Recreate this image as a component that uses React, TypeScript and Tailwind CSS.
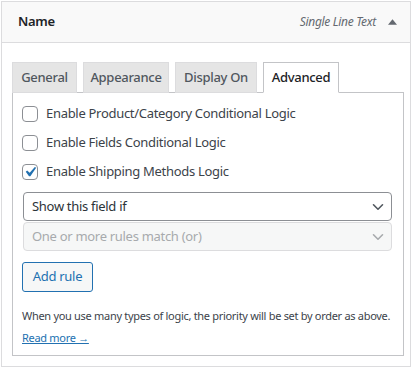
const tabs = [
  { label: "General", w: "w-[65px]" },
  { label: "Appearance", w: "w-[86px]" },
  { label: "Display On", w: "w-[82px]" },
  { label: "Advanced", w: "w-[76px]" },
]

const options = [
  { label: "Enable Product/Category Conditional Logic", checked: false },
  { label: "Enable Fields Conditional Logic", checked: false },
  { label: "Enable Shipping Methods Logic", checked: true },
]

function Chevron({ className }: { className: string }) {
  return (
    <svg className={className} viewBox="0 0 12 8" fill="none" stroke="currentColor" strokeWidth={1.6}>
      <path d="M1.5 1.8 6 6.2l4.5-4.4" strokeLinecap="round" strokeLinejoin="round" />
    </svg>
  )
}

export default function App() {
  return (
    <div className="w-[415px] h-[367px] bg-white pl-px pt-px font-['Noto_Sans',sans-serif] tracking-[-0.3px]">
      <div className="w-[410px] h-[366px] border border-[#dcdcde] flex flex-col">
        <div className="h-[41px] shrink-0 bg-[#f9f9f9] border-b border-[#dcdcde] flex items-center pl-[16px] pr-[13px]">
          <span className="text-[13px] font-semibold text-[#1d2327]">Name</span>
          <span className="ml-auto text-[12px] italic text-[#646970]">Single Line Text</span>
          <svg className="ml-[12px] w-[9px] h-[6px] text-[#646970]" viewBox="0 0 10 6" fill="currentColor">
            <path d="M5 0 10 6H0z" />
          </svg>
        </div>
        <div className="pt-[19px] pl-[10px] pr-[6px]">
          <div className="flex gap-[6px] h-[31px] relative z-10">
            {tabs.map((t) => {
              const active = t.label === "Advanced"
              return (
                <div
                  key={t.label}
                  className={
                    active
                      ? `${t.w} justify-center flex items-center border border-[#c3c4c7] border-b-white bg-white text-[13px] text-[#1d2327] font-medium`
                      : `${t.w} justify-center flex items-center border border-[#dcdcde] bg-[#e5e5e5] text-[13px] text-[#50575e] font-medium`
                  }
                >
                  {t.label}
                </div>
              )
            })}
          </div>
          <div className="-mt-px border border-[#c3c4c7] h-[264px] pl-[9px] pr-[9px] pt-[13px]">
            <div className="flex flex-col gap-[13px]">
              {options.map((o) => (
                <label key={o.label} className="flex items-center gap-[8px] h-[16px]">
                  <span className="w-[16px] h-[16px] shrink-0 rounded-[4px] border border-[#8c8f94] bg-white flex items-center justify-center">
                    {o.checked && (
                      <svg className="w-[20px] h-[20px] -m-[3px] text-[#2271b1]" viewBox="0 0 20 20" fill="currentColor">
                        <path d="M14.83 4.89l1.34.94-5.81 8.38H9.02L5.78 9.67l1.34-1.25 2.57 2.4z" />
                      </svg>
                    )}
                  </span>
                  <span className="text-[13px] text-[#3c434a]">{o.label}</span>
                </label>
              ))}
            </div>
            <div className="mt-[12px] ml-px w-[369px]">
              <div className="h-[29px] border border-[#8c8f94] rounded-[4px] bg-white flex items-center pl-[8px] pr-[7px]">
                <span className="text-[13px] text-[#2c3338]">Show this field if</span>
                <Chevron className="ml-auto w-[12px] h-[8px] text-[#50575e]" />
              </div>
              <div className="mt-px h-[29px] border border-[#dcdcde] rounded-[4px] bg-[#f6f7f7] flex items-center pl-[8px] pr-[7px]">
                <span className="text-[13px] text-[#a7aaad]">One or more rules match (or)</span>
                <Chevron className="ml-auto w-[12px] h-[8px] text-[#a7aaad]" />
              </div>
            </div>
            <button className="block mt-[11px] h-[30px] w-[71px] border border-[#2271b1] rounded-[3px] bg-[#f6f7f7] text-[13px] text-[#2271b1]">
              Add rule
            </button>
            <p className="mt-[16px] text-[11px] text-[#3c434a] leading-[16px] whitespace-nowrap">
              When you use many types of logic, the priority will be set by order as above.
            </p>
            <a className="inline-block mt-[1px] text-[11px] leading-[16px] text-[#2271b1] underline">Read more →</a>
          </div>
        </div>
      </div>
    </div>
  )
}
